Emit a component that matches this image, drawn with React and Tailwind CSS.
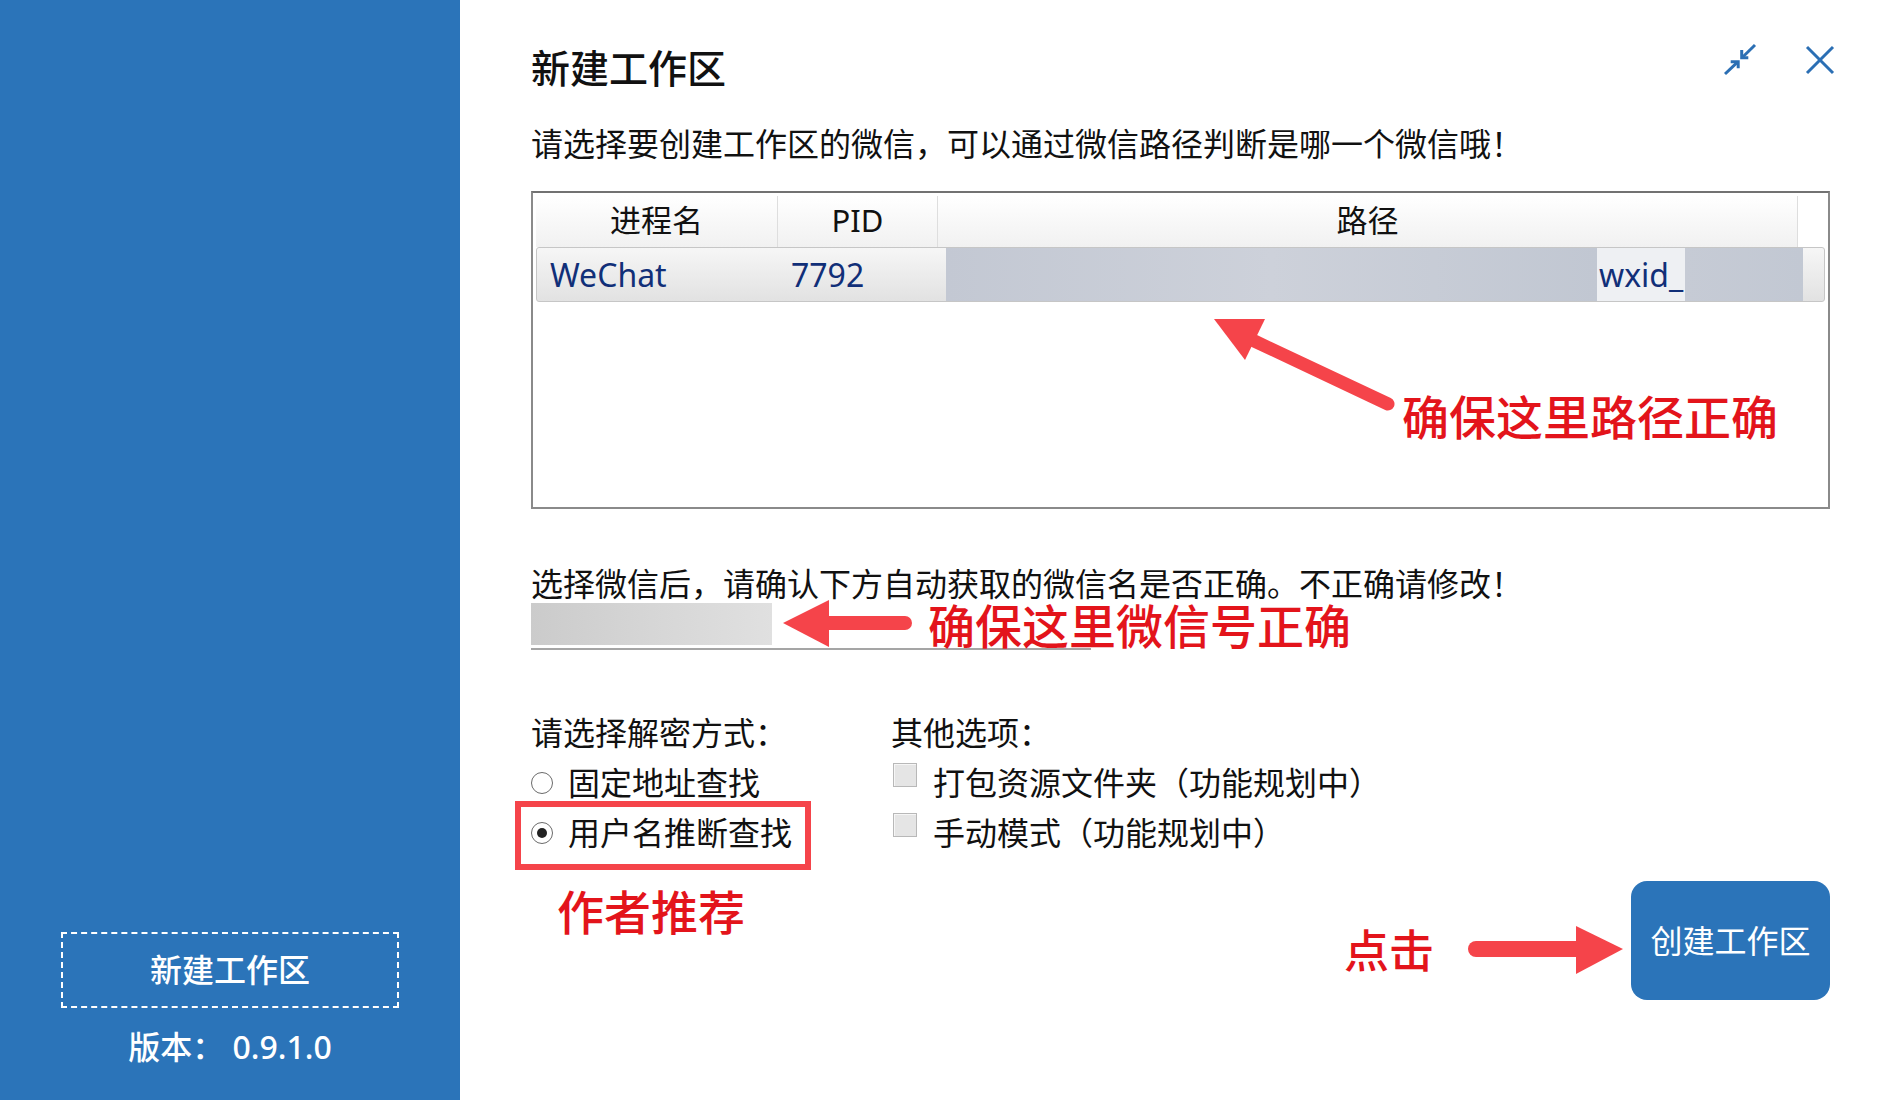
import React from 'react';

// 标注用的红色
const RED_TEXT = 'text-[#e3141b]';

function ShrinkIcon() {
  return (
    <svg width="36" height="36" viewBox="0 0 36 36" fill="none" stroke="currentColor" strokeWidth="3">
      <line x1="33" y1="3" x2="21" y2="14.7" />
      <polyline points="19.7,8 19.7,15.8 26.3,15.8" />
      <line x1="3" y1="32" x2="15" y2="20.7" />
      <polyline points="8.7,19.7 16.2,19.7 16.2,26.3" />
    </svg>
  );
}

function CloseIcon() {
  return (
    <svg className="mt-[3px]" width="30" height="30" viewBox="0 0 30 30" fill="none" stroke="currentColor" strokeWidth="3">
      <line x1="2" y1="2" x2="28" y2="28" />
      <line x1="28" y1="2" x2="2" y2="28" />
    </svg>
  );
}

function Radio({ label, checked }) {
  return (
    <div className="flex h-[50px] items-center">
      <span className="mr-[15px] flex h-[22px] w-[22px] items-center justify-center rounded-full border-[1.5px] border-[#6b6b6b] bg-white">
        {checked && <span className="h-[10px] w-[10px] rounded-full bg-[#222]" />}
      </span>
      <span className="whitespace-nowrap">{label}</span>
    </div>
  );
}

function Checkbox({ label }) {
  return (
    <div className="flex h-[50px] items-start">
      <span className="ml-[2px] mr-[16px] mt-[5px] h-[24px] w-[24px] shrink-0 border border-[#b8b8b8] bg-[#e5e5e5] shadow-[inset_1px_1px_0_#f6f6f6]" />
      <span className="whitespace-nowrap">{label}</span>
    </div>
  );
}

export default function App() {
  return (
    <div className="flex h-[1100px] w-[1900px] overflow-hidden bg-white font-['Noto_Sans','Noto_Sans_CJK_SC',sans-serif] text-[#111]">
      {/* Sidebar */}
      <aside className="flex w-[460px] shrink-0 flex-col items-center justify-end bg-[#2b74b9] pb-[33px] text-white">
        <div className="flex h-[76px] w-[338px] items-center justify-center border-2 border-dashed border-white text-[32px] font-medium">
          新建工作区
        </div>
        <div className="mt-[19px] text-[32px] font-medium leading-[40px]">版本： 0.9.1.0</div>
      </aside>

      {/* Main */}
      <main className="flex w-[1440px] shrink-0 flex-col pl-[71px] pr-[70px] pt-[42px]">
        <div className="flex items-start justify-between">
          <h1 className="text-[39px] font-medium leading-[52px]">新建工作区</h1>
          <div className="-mr-[5px] flex items-start gap-[47px] text-[#2b6fb4]">
            <ShrinkIcon />
            <CloseIcon />
          </div>
        </div>

        <p className="mt-[30px] whitespace-nowrap text-[32px] leading-[40px]">请选择要创建工作区的微信，可以通过微信路径判断是哪一个微信哦！</p>

        {/* Process table */}
        <div className="relative mt-[27px] h-[318px] border-2 border-[#8a8a8a] border-t-[#727272] p-[3px]">
          <div className="flex h-[51px] w-[1262px] bg-gradient-to-b from-white to-[#f1f1f1] text-[31px] leading-[40px]">
            <div className="flex w-[242px] items-center justify-center border-r border-[#dedede] pb-[3px]">进程名</div>
            <div className="flex w-[160px] items-center justify-center border-r border-[#dedede] pb-[3px]">PID</div>
            <div className="flex flex-1 items-center justify-center border-r border-[#dedede] pb-[3px]">路径</div>
          </div>
          <div className="flex h-[55px] items-stretch rounded-[3px] border border-[#c6c6c6] bg-gradient-to-b from-[#f6f6f6] to-[#e2e2e2] text-[32px] text-[#112f78]">
            <div className="flex w-[241px] items-center pl-[13px]">WeChat</div>
            <div className="flex w-[160px] items-center pl-[13px]">7792</div>
            <div className="ml-[8px] w-[651px] bg-gradient-to-r from-[#c3c8d3] via-[#cdd1da] to-[#c1c7d2]" />
            <div className="flex w-[88px] items-center bg-[#eef0f3] pl-[2px]">wxid_</div>
            <div className="w-[118px] bg-gradient-to-r from-[#c6cbd5] to-[#c2c8d3]" />
          </div>

          <svg className="absolute left-[667px] top-[107px]" width="200" height="120" viewBox="0 0 200 120">
            <line x1="48" y1="38" x2="188" y2="104" stroke="#f5444a" strokeWidth="13" strokeLinecap="round" />
            <polygon points="14,19 65,19 45,60" fill="#f5444a" />
          </svg>
          <span className={`absolute left-[869px] top-[196px] whitespace-nowrap text-[47px] font-medium leading-[56px] ${RED_TEXT}`}>
            确保这里路径正确
          </span>
        </div>

        <p className="mt-[56px] whitespace-nowrap text-[32px] leading-[38px]">选择微信后，请确认下方自动获取的微信名是否正确。不正确请修改！</p>
        <div className="relative w-[560px] border-b-2 border-[#a5a5a5] pb-[3px]">
          <div className="h-[42px] w-[241px] bg-gradient-to-r from-[#cbcbcb] via-[#d6d6d6] to-[#e0e0e0]" />
          <svg className="absolute left-[250px] top-[-5px]" width="134" height="54" viewBox="0 0 134 54">
            <line x1="40" y1="25" x2="124" y2="25" stroke="#f5444a" strokeWidth="14" strokeLinecap="round" />
            <polygon points="2,25 48,2 48,49" fill="#f5444a" />
          </svg>
          <span className={`absolute left-[397px] top-[-5px] whitespace-nowrap text-[47px] font-medium leading-[56px] ${RED_TEXT}`}>
            确保这里微信号正确
          </span>
        </div>

        {/* Options */}
        <div className="mt-[58px] flex">
          <div className="w-[360px] shrink-0 text-[32px] leading-[50px]">
            <div className="whitespace-nowrap">请选择解密方式：</div>
            <Radio label="固定地址查找" />
            <div className="relative">
              <Radio checked label="用户名推断查找" />
              <span className="absolute -left-[16px] -top-[7px] h-[69px] w-[296px] border-[6px] border-[#f5444a]" />
            </div>
            <div className={`ml-[26px] mt-[26px] text-[47px] font-medium leading-[56px] ${RED_TEXT}`}>作者推荐</div>
          </div>
          <div className="w-[440px] shrink-0 text-[32px] leading-[50px]">
            <div className="whitespace-nowrap">其他选项：</div>
            <Checkbox label="打包资源文件夹（功能规划中）" />
            <Checkbox label="手动模式（功能规划中）" />
          </div>

          <div className="ml-auto mt-[173px] flex shrink-0 items-center self-start">
            <span className={`mt-[20px] whitespace-nowrap text-[45px] font-medium leading-[56px] ${RED_TEXT}`}>点击</span>
            <svg className="ml-[32px] mt-[16px] shrink-0" width="160" height="52" viewBox="0 0 160 52">
              <line x1="10" y1="26" x2="120" y2="26" stroke="#f5444a" strokeWidth="16" strokeLinecap="round" />
              <polygon points="110,3 157,26 110,51" fill="#f5444a" />
            </svg>
            <button className="ml-[5px] flex h-[119px] w-[199px] shrink-0 items-center justify-center rounded-[16px] bg-[#2b74b9] text-[32px] text-white">
              创建工作区
            </button>
          </div>
        </div>
      </main>
    </div>
  );
}
